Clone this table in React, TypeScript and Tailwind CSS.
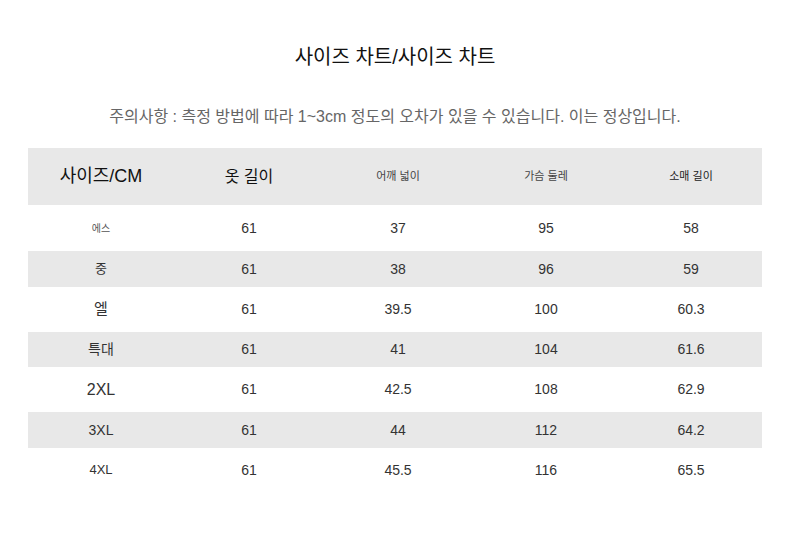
const rows = [
  { size: "에스", sizeCls: "text-[10px] text-[#555]", v: ["61", "37", "95", "58"], h: "h-[46px]", gray: false },
  { size: "중", sizeCls: "text-[13px] text-[#333]", v: ["61", "38", "96", "59"], h: "h-[36px]", gray: true },
  { size: "엘", sizeCls: "text-[15px] text-[#333]", v: ["61", "39.5", "100", "60.3"], h: "h-[45px]", gray: false },
  { size: "특대", sizeCls: "text-[14px] text-[#333]", v: ["61", "41", "104", "61.6"], h: "h-[35px]", gray: true },
  { size: "2XL", sizeCls: "text-[16px] text-[#333]", v: ["61", "42.5", "108", "62.9"], h: "h-[45px]", gray: false },
  { size: "3XL", sizeCls: "text-[14px] text-[#333]", v: ["61", "44", "112", "64.2"], h: "h-[36px]", gray: true },
  { size: "4XL", sizeCls: "text-[13px] text-[#333]", v: ["61", "45.5", "116", "65.5"], h: "h-[44px]", gray: false },
];

const cols = "grid grid-cols-[146px_150px_148px_148px_142px]";

export default function App() {
  return (
    <div
      className="w-[790px] h-[533px] bg-white overflow-hidden"
      style={{ fontFamily: '"Liberation Sans", Arial, "Noto Sans CJK KR", sans-serif' }}
    >
      <div className="pt-[44px] text-center text-[20px] leading-[26px] text-[#111]">
        사이즈 차트/사이즈 차트
      </div>
      <div className="mt-[37px] text-center text-[16px] leading-[20px] text-[#666]">
        주의사항 : 측정 방법에 따라 1~3cm 정도의 오차가 있을 수 있습니다. 이는 정상입니다.
      </div>

      <div className="mx-[28px] mt-[21px] w-[734px]">
        <div className={`${cols} h-[57px] items-center bg-[#e8e8e8] text-center text-[#111]`}>
          <div className="text-[18px]">사이즈/CM</div>
          <div className="text-[16px]">옷 길이</div>
          <div className="text-[11px] text-[#444]">어깨 넓이</div>
          <div className="text-[11px] text-[#444]">가슴 둘레</div>
          <div className="text-[11px] text-[#222]">소매 길이</div>
        </div>
        {rows.map((r, i) => (
          <div
            key={i}
            className={`${cols} ${r.h} items-center text-center text-[14px] text-[#333] ${r.gray ? "bg-[#e8e8e8]" : "bg-white"}`}
          >
            <div className={r.sizeCls}>{r.size}</div>
            {r.v.map((x, j) => (
              <div key={j}>{x}</div>
            ))}
          </div>
        ))}
      </div>
    </div>
  );
}
